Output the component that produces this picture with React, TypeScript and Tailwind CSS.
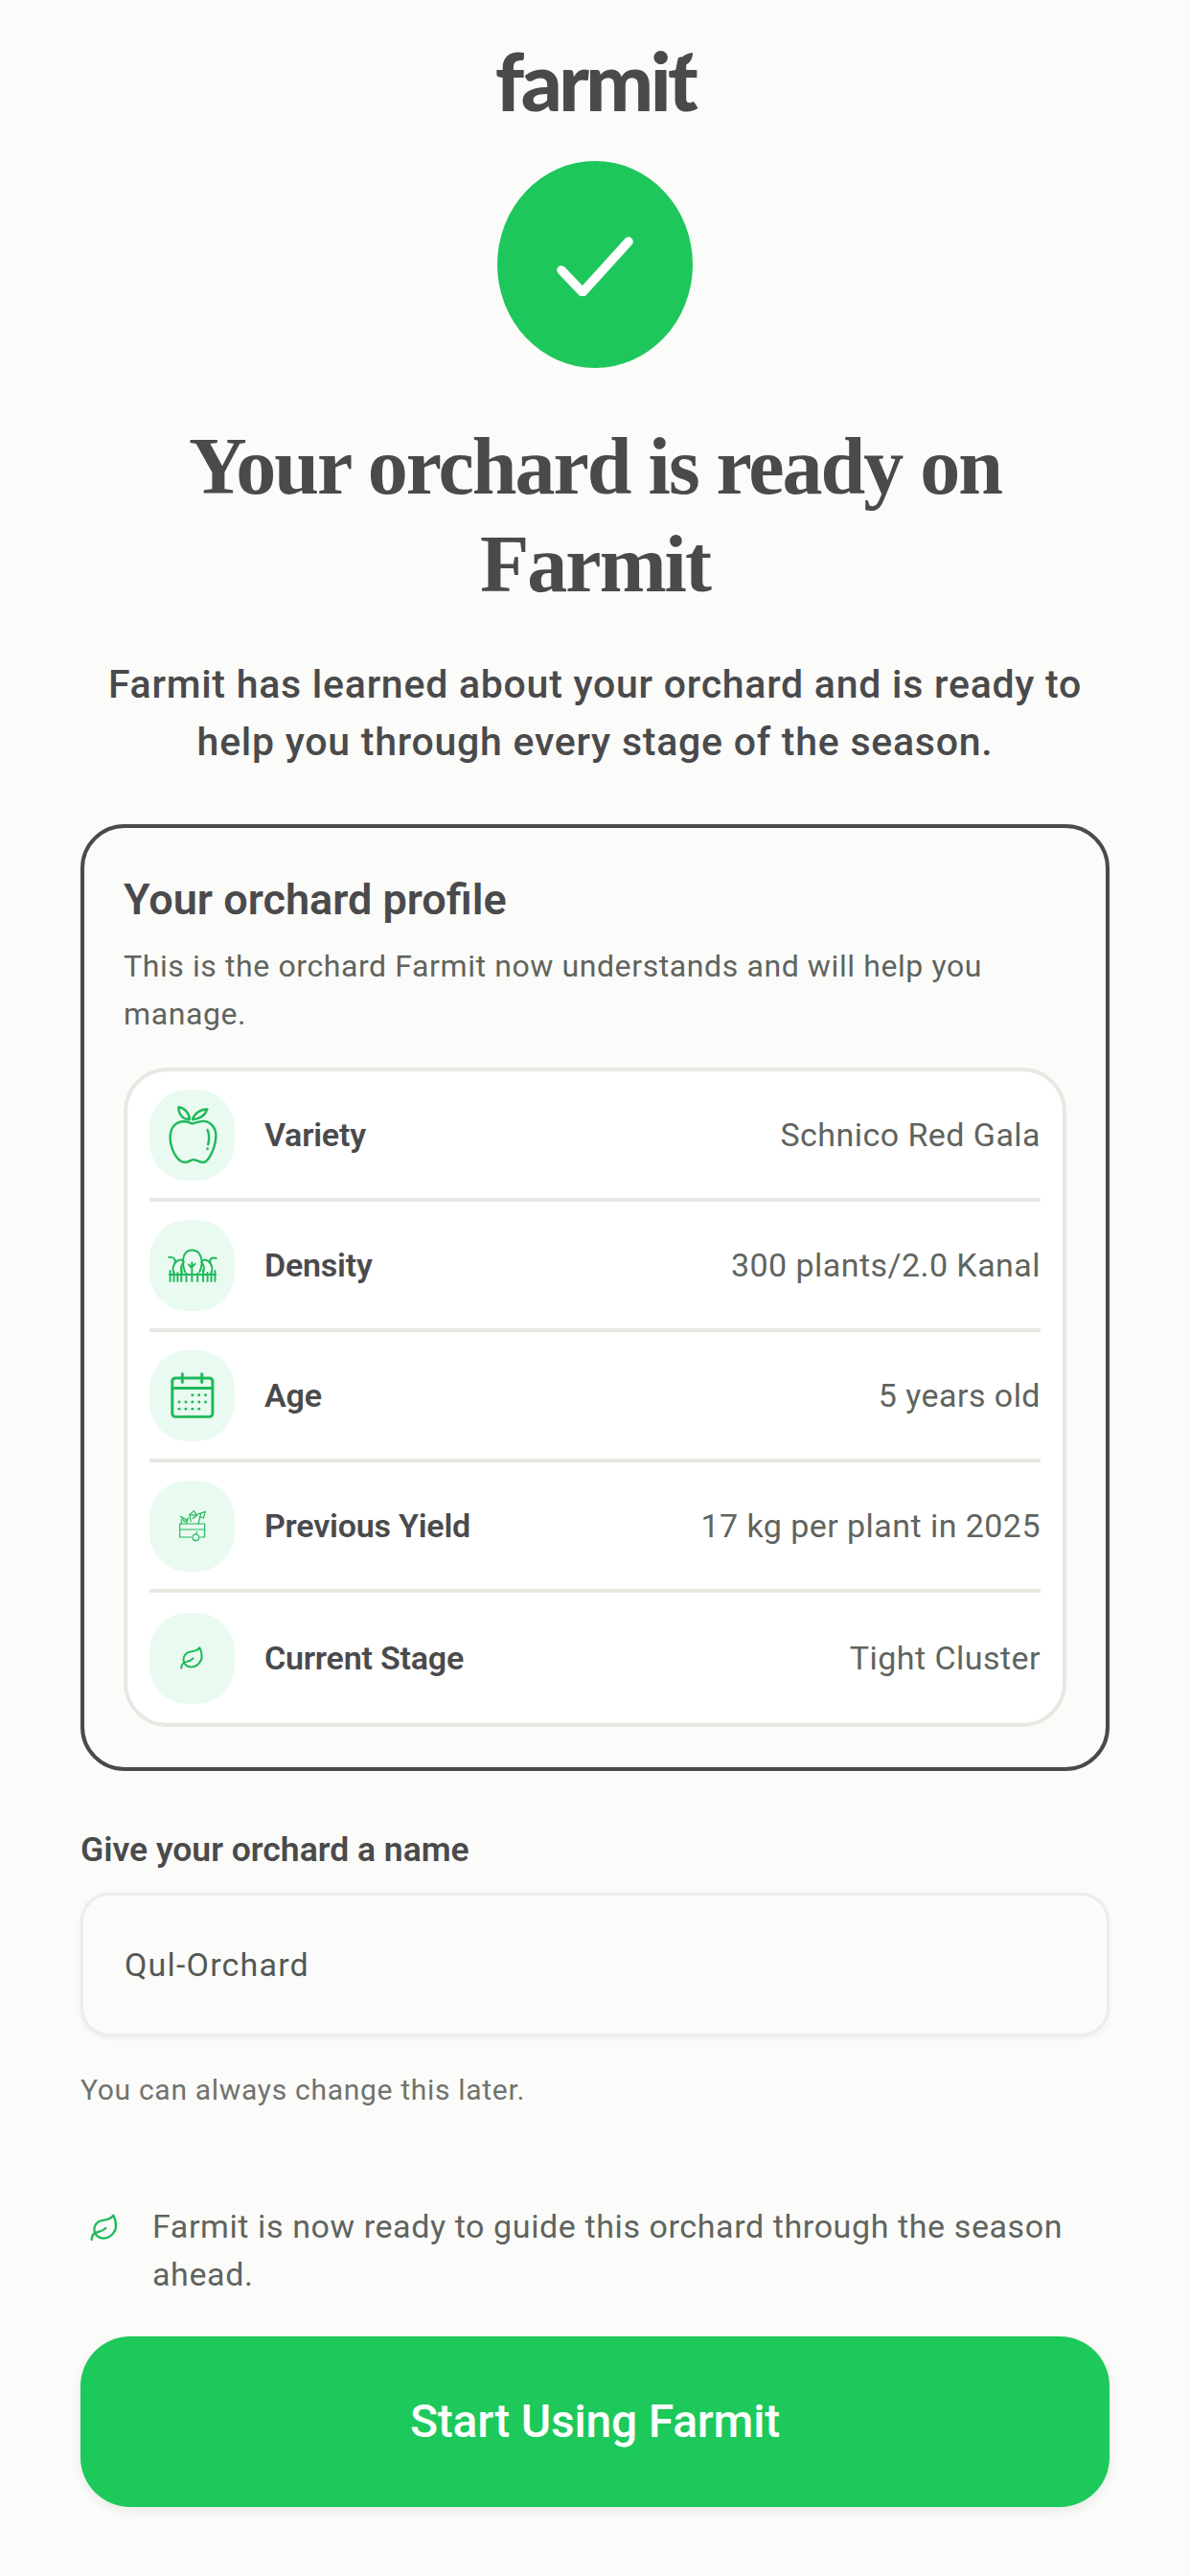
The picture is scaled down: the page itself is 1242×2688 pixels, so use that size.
import React from "react";
import { Leaf } from "lucide-react";

const iconGreen = "#20b95b";

const AppleIcon = () => (
  <svg width="52" height="66" viewBox="130 95 160 197" fill="none" stroke={iconGreen} strokeWidth="7.5" strokeLinecap="round" strokeLinejoin="round">
    <path d="M208 158C190 148 165 148 150 165C135 182 135 215 145 240C155 265 170 285 190 282C200 280 205 273 215 274C225 275 235 285 248 282C265 275 285 230 285 195C285 170 265 150 245 150C232 150 220 155 208 158Z" />
    <path d="M165 105C185 108 200 125 200 145C180 145 165 130 165 105Z" />
    <path d="M210 145C215 125 235 112 257 112C250 132 235 143 210 145Z" />
    <path d="M258 178C265 195 263 212 260 225M258 238v2" />
  </svg>
);

const TreesIcon = () => (
  <svg width="52" height="37" viewBox="130 545 160 112" fill="none" stroke={iconGreen} strokeWidth="6" strokeLinecap="round" strokeLinejoin="round">
    <path d="M186 622C172 585 180 552 208 552C238 552 248 590 232 622" />
    <path d="M208 652V592M208 610L198 598M208 606L218 596" />
    <path d="M134 575C150 572 158 582 152 596C146 606 146 616 150 624M152 596C160 582 174 578 182 590C172 600 172 612 176 624" />
    <path d="M286 578C270 572 262 582 268 596C274 606 274 616 270 624M268 596C260 582 246 578 238 590C248 600 248 612 244 624" />
    <path d="M136 630H284" />
    <path d="M138 618V652M150 622V652M162 624V652M174 606V652M190 626V652M226 626V652M244 616V652M258 624V652M270 622V652M282 618V652" />
  </svg>
);

const CalendarIcon = () => {
  const dots = [
    [212, 172], [233, 172], [254, 172],
    [170, 194], [191, 194], [212, 194], [233, 194], [254, 194],
    [170, 216], [191, 216], [212, 216], [233, 216],
  ];
  return (
    <svg width="46" height="48" viewBox="143 100 139 146" fill="none" stroke={iconGreen} strokeWidth="9" strokeLinecap="round" strokeLinejoin="round">
      <rect x="148" y="118" width="128" height="123" rx="10" />
      <path d="M148 150H276M180 105V132M242 105V132" />
      {dots.map(([cx, cy]) => (
        <circle key={`${cx}-${cy}`} cx={cx} cy={cy} r="4.5" fill={iconGreen} stroke="none" />
      ))}
    </svg>
  );
};

const CrateIcon = () => (
  <svg width="30" height="34" viewBox="165 533 90 102" fill="none" stroke={iconGreen} strokeWidth="3.5" strokeLinecap="round" strokeLinejoin="round">
    <path d="M170 578H248V596H170ZM170 596V620H206M234 620H248V596" />
    <path d="M175 578V565M172 555L192 566L184 572L176 558M190 578L196 560" />
    <path d="M205 570L200 550L214 538L224 552L210 562M200 550L224 552" />
    <path d="M228 578L236 545M226 548L250 540L244 560L232 556" />
    <circle cx="220" cy="621" r="10" />
    <path d="M220 611L224 604" />
  </svg>
);

const rows = [
  { label: "Variety", value: "Schnico Red Gala", icon: <AppleIcon /> },
  { label: "Density", value: "300 plants/2.0 Kanal", icon: <TreesIcon /> },
  { label: "Age", value: "5 years old", icon: <CalendarIcon /> },
  { label: "Previous Yield", value: "17 kg per plant in 2025", icon: <CrateIcon /> },
  { label: "Current Stage", value: "Tight Cluster", icon: <Leaf size={27} color={iconGreen} strokeWidth={1.8} /> },
];

export default function App() {
  return (
    <div className="min-h-[2688px] w-[1242px] bg-[#fbfbf9] px-[84px] pt-[42px] font-['Roboto',sans-serif] text-[#4a4a4c]">
      <div className="flex flex-col items-center">
        <div className="relative h-[84px] font-['Lato',sans-serif] text-[84px] font-black leading-[84px] tracking-[-3.5px]">
          farmit
          <svg className="absolute right-[1px] top-[13px]" width="17" height="15" viewBox="0 0 17 15" fill="#4a4a4c">
            <path d="M1 15C1 6 7 1 16 0C16 9 10 14 1 15Z" />
          </svg>
        </div>
        <div className="mt-[42px] flex h-[216px] w-[204px] items-center justify-center rounded-[50%] bg-[#1ec75b]">
          <svg width="80" height="66" viewBox="0 0 80 66" fill="none" stroke="#ffffff" strokeWidth="9.5" strokeLinecap="round" strokeLinejoin="round">
            <path d="M5 39L27 62L75 9" />
          </svg>
        </div>
        <h1 className="mt-[52px] w-[900px] text-center font-['Liberation_Serif',serif] text-[84px] font-bold leading-[102px] tracking-[-2px]">
          Your orchard is ready on Farmit
        </h1>
        <p className="mt-[44px] w-[1040px] text-center text-[41px] font-medium leading-[60px] tracking-[0.75px]">
          Farmit has learned about your orchard and is ready to help you through every stage of the season.
        </p>
      </div>

      <section className="mt-[56px] rounded-[46px] border-4 border-[#4a4a4c] bg-[#fbfbf9] px-[41px] pt-[50px] pb-[42px]">
        <h2 className="text-[45px] font-semibold leading-[50px]">Your orchard profile</h2>
        <p className="mt-[19px] text-[32px] leading-[50px] tracking-[0.6px] text-[#5f645e]">
          This is the orchard Farmit now understands and will help you manage.
        </p>
        <div className="mt-[31px] rounded-[46px] border-4 border-[#e8e8e3] bg-white px-[23px]">
          {rows.map((row, i) => (
            <div
              key={row.label}
              className={`flex h-[136px] items-center ${i < rows.length - 1 ? "border-b-4 border-[#e8e8e3]" : ""}`}
            >
              <div className="flex h-[95px] w-[89px] shrink-0 items-center justify-center rounded-[40px] bg-[#e9faf0]">
                {row.icon}
              </div>
              <span className="ml-[31px] text-[34px] font-semibold tracking-[-0.2px]">{row.label}</span>
              <span className="ml-auto text-[34px] tracking-[0.45px] text-[#5f645e]">{row.value}</span>
            </div>
          ))}
        </div>
      </section>

      <label className="mt-[60px] block text-[35.5px] font-semibold leading-[44px]">Give your orchard a name</label>
      <div className="mt-[23px] flex h-[150px] items-center rounded-[30px] border-[3px] border-[#ececea] bg-[#fbfbf9] px-[43px] text-[34px] tracking-[1.2px] text-[#555854] shadow-[0_2px_6px_rgba(0,0,0,0.05)]">
        Qul-Orchard
      </div>
      <p className="mt-[36px] text-[30px] leading-[40px] tracking-[0.7px] text-[#6f736e]">You can always change this later.</p>

      <div className="mt-[97px] flex items-start">
        <Leaf size={32} color={iconGreen} strokeWidth={1.8} className="ml-[9px] mt-[11px] shrink-0" />
        <p className="ml-[34px] text-[34px] leading-[50px] tracking-[0.6px] text-[#5f645e]">
          Farmit is now ready to guide this orchard through the season ahead.
        </p>
      </div>

      <button className="mt-[40px] flex h-[178px] w-full items-center justify-center rounded-[52px] bg-[#1cc95a] text-[48px] font-medium tracking-[-0.2px] text-white shadow-[0_4px_12px_rgba(0,0,0,0.08)]">
        Start Using Farmit
      </button>
    </div>
  );
}
